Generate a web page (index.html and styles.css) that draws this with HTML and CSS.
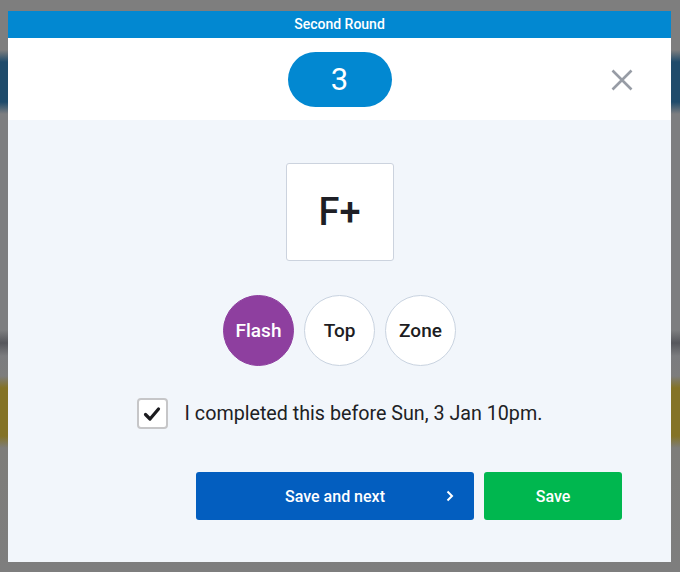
FILE: index.html
```html
<!DOCTYPE html>
<html lang="en">
<head>
  <meta charset="UTF-8" />
  <title>Second Round</title>
  <link rel="stylesheet" href="styles.css">
</head>
<body>
  <div class="modal">
    <div class="modal-title">Second Round</div>

    <div class="modal-top">
      <div class="route-pill">3</div>
      <button class="close-btn" aria-label="Close">
        <svg width="22" height="22" viewBox="0 0 22 22">
          <path d="M1.5 1.5 L20.5 20.5 M20.5 1.5 L1.5 20.5" stroke="#979ca5" stroke-width="2.6" fill="none" />
        </svg>
      </button>
    </div>

    <div class="modal-body">
      <div class="grade-box">F+</div>

      <div class="result-options">
        <div class="result-circle active">Flash</div>
        <div class="result-circle">Top</div>
        <div class="result-circle">Zone</div>
      </div>

      <label class="confirm-row">
        <span class="checkbox">
          <svg width="20" height="20" viewBox="0 0 20 20">
            <path d="M3.5 10.5 L8 15 L16.5 5" stroke="#1b1b1f" stroke-width="3.2" fill="none" stroke-linecap="round" stroke-linejoin="round" />
          </svg>
        </span>
        <span class="confirm-text">I completed this before Sun, 3 Jan 10pm.</span>
      </label>

      <div class="actions">
        <button class="btn btn-next">
          Save and next
          <svg class="chevron" width="8" height="12" viewBox="0 0 8 12">
            <path d="M1.5 1.5 L6 6 L1.5 10.5" stroke="#fff" stroke-width="2" fill="none" />
          </svg>
        </button>
        <button class="btn btn-save">Save</button>
      </div>
    </div>
  </div>
</body>
</html>
```

FILE: styles.css
```css
body {
  font-family: Roboto, "Liberation Sans", sans-serif;
  margin: 0;
  padding: 11px 9px 0 8px;
  height: 572px;
  box-sizing: border-box;
  overflow: hidden;
  background: linear-gradient(
    to bottom,
    #7e7e7e 0px,
    #7e7e7e 50px,
    #1f4b6b 62px,
    #1f4b6b 102px,
    #7d7e80 114px,
    #7d7e80 330px,
    #56575c 343px,
    #7b7c7f 356px,
    #7d7d7d 376px,
    #847326 388px,
    #847326 436px,
    #7e7d7a 448px,
    #7e7e7e 572px
  );
}
.modal {
  width: 663px;
  height: 551px;
  display: flex;
  flex-direction: column;
  background: #f2f6fb;
}
.modal-title {
  height: 27px;
  line-height: 27px;
  background: #0288d1;
  color: #fff;
  text-align: center;
  font-size: 14px;
  font-weight: 500;
}
.modal-top {
  position: relative;
  height: 82px;
  background: #fff;
  display: flex;
  justify-content: center;
  align-items: center;
}
.route-pill {
  width: 104px;
  height: 55px;
  border-radius: 28px;
  background: #0288d1;
  color: #fff;
  font-size: 31px;
  line-height: 55px;
  text-align: center;
}
.close-btn {
  position: absolute;
  right: 38px;
  top: 31px;
  width: 22px;
  height: 22px;
  padding: 0;
  border: none;
  background: none;
  cursor: pointer;
}
.close-btn svg {
  display: block;
}
.modal-body {
  flex: 1;
  display: flex;
  flex-direction: column;
  align-items: center;
  padding-top: 43px;
}
.grade-box {
  width: 108px;
  height: 98px;
  box-sizing: border-box;
  border: 1px solid #ccd3de;
  border-radius: 3px;
  background: #fff;
  color: #1e1f26;
  font-size: 38px;
  font-weight: 500;
  display: flex;
  justify-content: center;
  align-items: center;
}
.result-options {
  display: flex;
  gap: 10px;
  margin-top: 34px;
}
.result-circle {
  width: 71px;
  height: 71px;
  box-sizing: border-box;
  border-radius: 50%;
  border: 1px solid #c9d3e0;
  background: #fff;
  color: #1d1d22;
  font-size: 19px;
  font-weight: 500;
  display: flex;
  justify-content: center;
  align-items: center;
}
.result-circle.active {
  background: #8e3f9f;
  border-color: #8e3f9f;
  color: #fff;
}
.confirm-row {
  display: flex;
  align-items: center;
  gap: 17px;
  margin-top: 32px;
}
.checkbox {
  width: 31px;
  height: 31px;
  box-sizing: border-box;
  border: 2px solid #c6c6c8;
  border-radius: 4px;
  background: #fff;
  display: flex;
  justify-content: center;
  align-items: center;
}
.confirm-text {
  font-size: 19.7px;
  color: #202124;
}
.actions {
  align-self: stretch;
  display: flex;
  justify-content: flex-end;
  gap: 10px;
  padding-right: 49px;
  margin-top: 43px;
}
.btn {
  height: 48px;
  border: none;
  border-radius: 3px;
  color: #fff;
  font-family: inherit;
  font-size: 16px;
  font-weight: 500;
  cursor: pointer;
}
.btn-next {
  position: relative;
  width: 278px;
  background: #035ebf;
}
.chevron {
  position: absolute;
  right: 20px;
  top: 18px;
}
.btn-save {
  width: 138px;
  background: #00b74f;
}
```
